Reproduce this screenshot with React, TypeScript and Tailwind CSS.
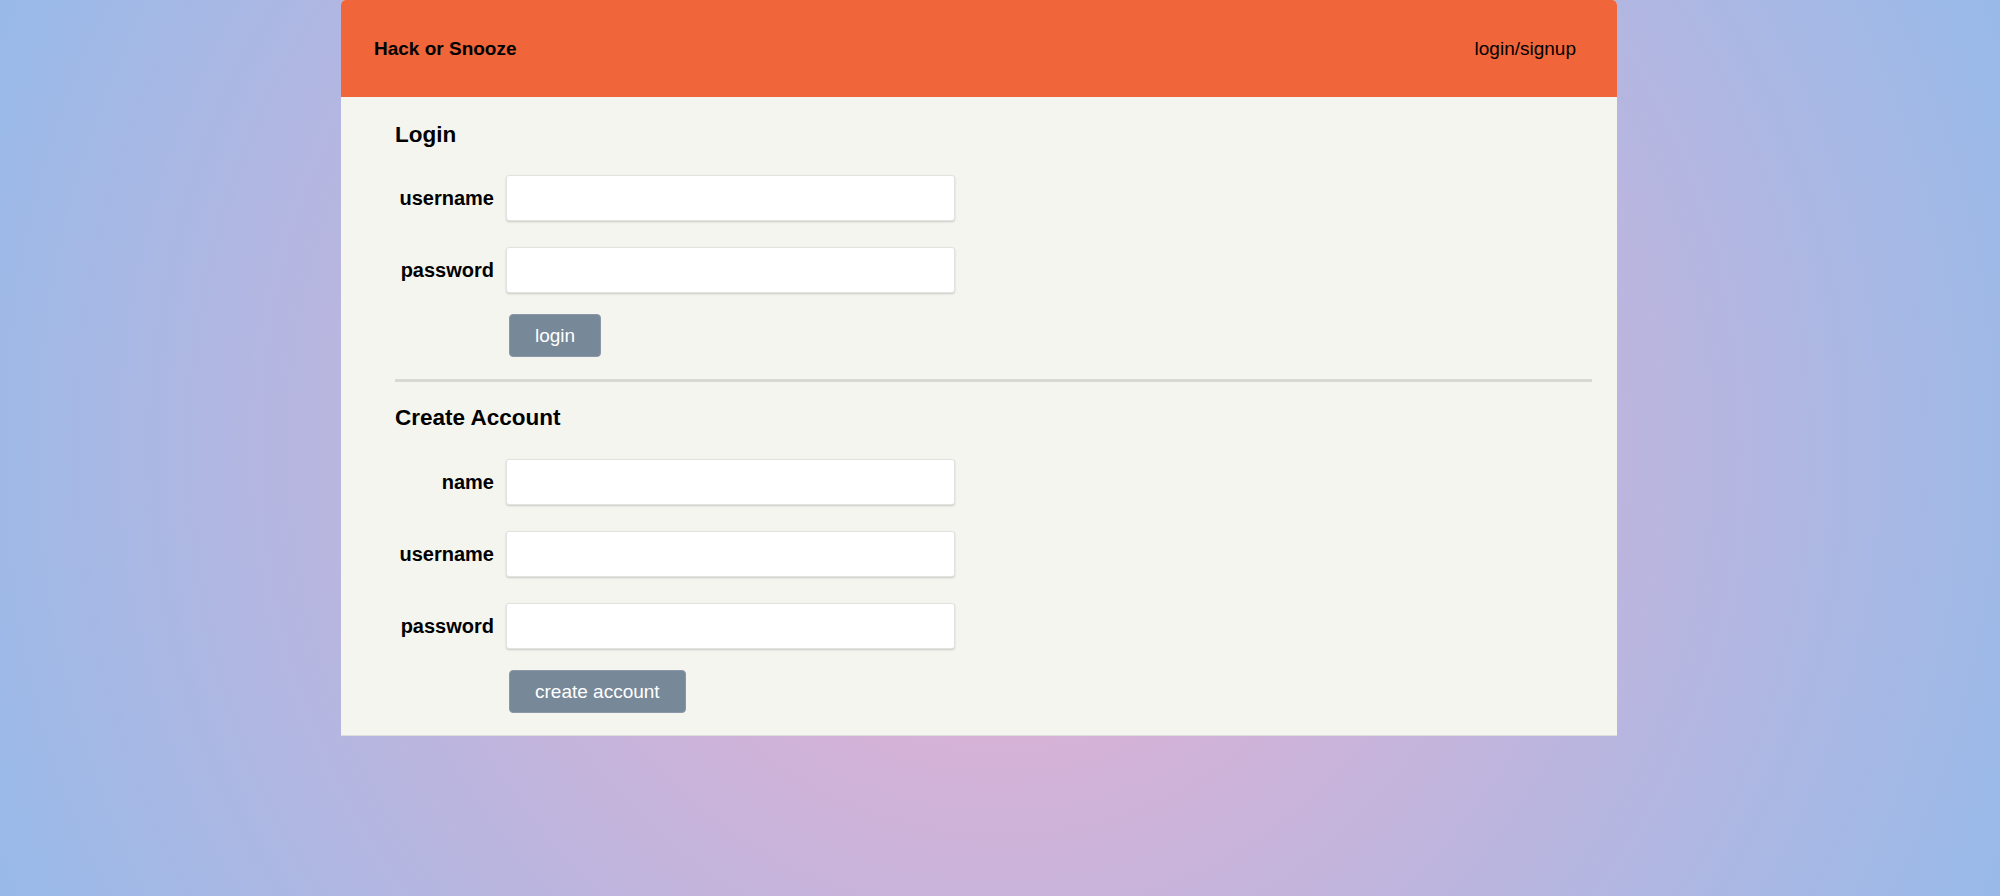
const font = { fontFamily: '"Liberation Sans", Arial, sans-serif' };

function Field({ label, type = "text" }: { label: string; type?: string }) {
  return (
    <div className="flex items-center">
      <label className="w-[99px] text-right text-[20px] font-bold text-black leading-none">
        {label}
      </label>
      <input
        type={type}
        className="ml-[12px] w-[449px] h-[46px] bg-white border border-[#e2e2e0] rounded-[3px] shadow-[0_1px_2px_rgba(0,0,0,0.18)] outline-none px-2"
      />
    </div>
  );
}

function Button({ children }: { children: string }) {
  return (
    <button className="ml-[114px] h-[43px] px-[25px] rounded-[4px] bg-[#778899] border border-[#8a97a6] text-white text-[19px] leading-none self-start">
      {children}
    </button>
  );
}

export default function App() {
  return (
    <div
      className="min-h-screen w-full bg-[radial-gradient(circle,#ecafd0_0%,#98bae9_100%)]"
      style={font}
    >
      <div className="ml-[341px] w-[1276px] bg-[#f5f5f0] border-b border-[#dcdcdc] rounded-t-[5px] overflow-hidden">
        <nav className="h-[97px] bg-[#f06539] flex items-center justify-between pl-[33px] pr-[41px] pt-[2px]">
          <span className="text-[19px] font-bold text-black">Hack or Snooze</span>
          <span className="text-[19px] text-black">login/signup</span>
        </nav>

        <div className="pl-[54px] pr-[25px] pt-[24px] pb-[22px] flex flex-col">
          <h2 className="text-[22.5px] font-bold leading-[27px] text-black">Login</h2>
          <div className="mt-[27px] flex flex-col gap-[26px]">
            <Field label="username" />
            <Field label="password" type="password" />
          </div>
          <div className="mt-[21px] flex">
            <Button>login</Button>
          </div>

          <hr className="mt-[22px] h-[3px] border-0 bg-[#d8d8d5]" />

          <h2 className="mt-[22px] text-[22.5px] font-bold leading-[27px] text-black">
            Create Account
          </h2>
          <div className="mt-[28px] flex flex-col gap-[26px]">
            <Field label="name" />
            <Field label="username" />
            <Field label="password" type="password" />
          </div>
          <div className="mt-[21px] flex">
            <Button>create account</Button>
          </div>
        </div>
      </div>
    </div>
  );
}
